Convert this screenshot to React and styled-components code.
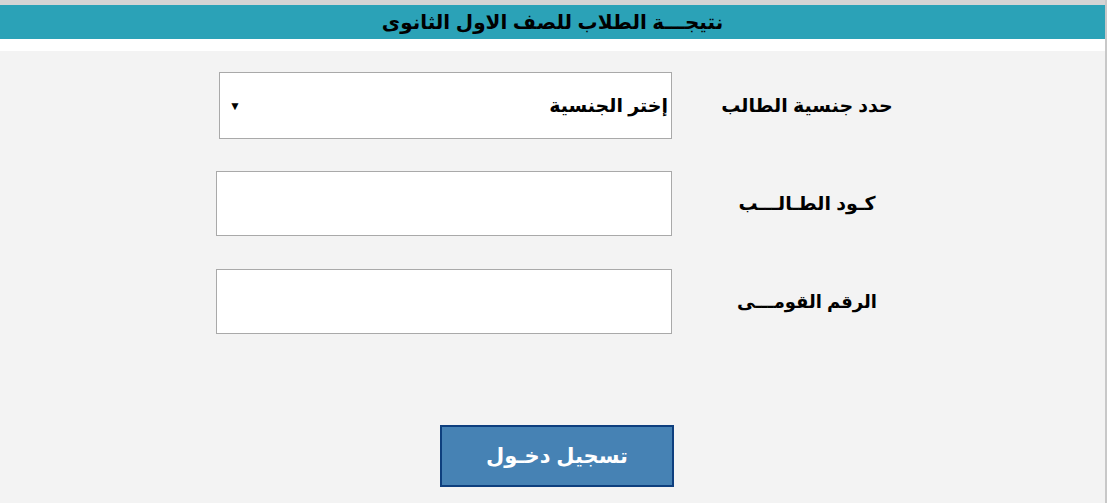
import React from "react";
import styled, { createGlobalStyle } from "styled-components";

const GlobalStyle = createGlobalStyle`
  html, body {
    margin: 0;
    padding: 0;
    background: #d6d6d6;
  }
  body {
    font-family: "Liberation Sans", "DejaVu Sans", sans-serif;
  }
`;

const Page = styled.div`
  width: 1105px;
  height: 503px;
  display: flex;
  flex-direction: column;
  background: #f3f3f3;
  border-right: 2px solid #c8c8c8;
`;

const TopStrip = styled.div`
  height: 5px;
  background: #d4d4d4;
`;

const Header = styled.h1`
  margin: 0;
  height: 34px;
  background: #2ba2b7;
  color: #000;
  font-size: 20px;
  font-weight: bold;
  line-height: 34px;
  text-align: center;
  direction: rtl;
`;

const Gap = styled.div`
  height: 12px;
  background: #fff;
`;

const Form = styled.form`
  flex: 1;
  display: flex;
  flex-direction: column;
  padding: 21px 0 0 216px;
`;

const Row = styled.div`
  display: flex;
  align-items: center;
  margin-bottom: ${p => p.$gap || 32}px;
`;

const Label = styled.label`
  width: 270px;
  text-align: center;
  direction: rtl;
  font-size: ${p => p.$size || 19}px;
  font-weight: bold;
  color: #000;
`;

const Select = styled.div`
  box-sizing: border-box;
  width: 453px;
  height: 67px;
  margin-left: 3px;
  background: #fff;
  border: 1px solid #a9a9a9;
  display: flex;
  align-items: center;
  justify-content: space-between;
  padding: 0 3px 0 9px;
  direction: ltr;
`;

const Arrow = styled.span`
  font-size: 12px;
  color: #000;
`;

const SelectText = styled.span`
  direction: rtl;
  font-size: 19px;
  font-weight: bold;
  color: #000;
`;

const Input = styled.input`
  box-sizing: border-box;
  width: 456px;
  height: 65px;
  margin: 0;
  background: #fff;
  border: 1px solid #a9a9a9;
  outline: none;
`;

const ButtonRow = styled.div`
  margin-top: 59px;
  padding-left: 224px;
`;

const Button = styled.button`
  box-sizing: border-box;
  width: 234px;
  height: 62px;
  background: #4682b4;
  border: 2px solid #0e3f7e;
  color: #fff;
  font-family: inherit;
  font-size: 21px;
  font-weight: bold;
  direction: rtl;
  cursor: pointer;
`;

export default function App() {
  return (
    <>
      <GlobalStyle />
      <Page>
        <TopStrip />
        <Header>نتيجـــة الطلاب للصف الاول الثانوى</Header>
        <Gap />
        <Form>
          <Row>
            <Select>
              <Arrow>▼</Arrow>
              <SelectText>إختر الجنسية</SelectText>
            </Select>
            <Label>حدد جنسية الطالب</Label>
          </Row>
          <Row $gap={33}>
            <Input type="text" />
            <Label>كـود الطـالـــب</Label>
          </Row>
          <Row $gap={0}>
            <Input type="text" />
            <Label $size={18}>الرقم القومـــى</Label>
          </Row>
          <ButtonRow>
            <Button type="button">تسجيل دخـول</Button>
          </ButtonRow>
        </Form>
      </Page>
    </>
  );
}
